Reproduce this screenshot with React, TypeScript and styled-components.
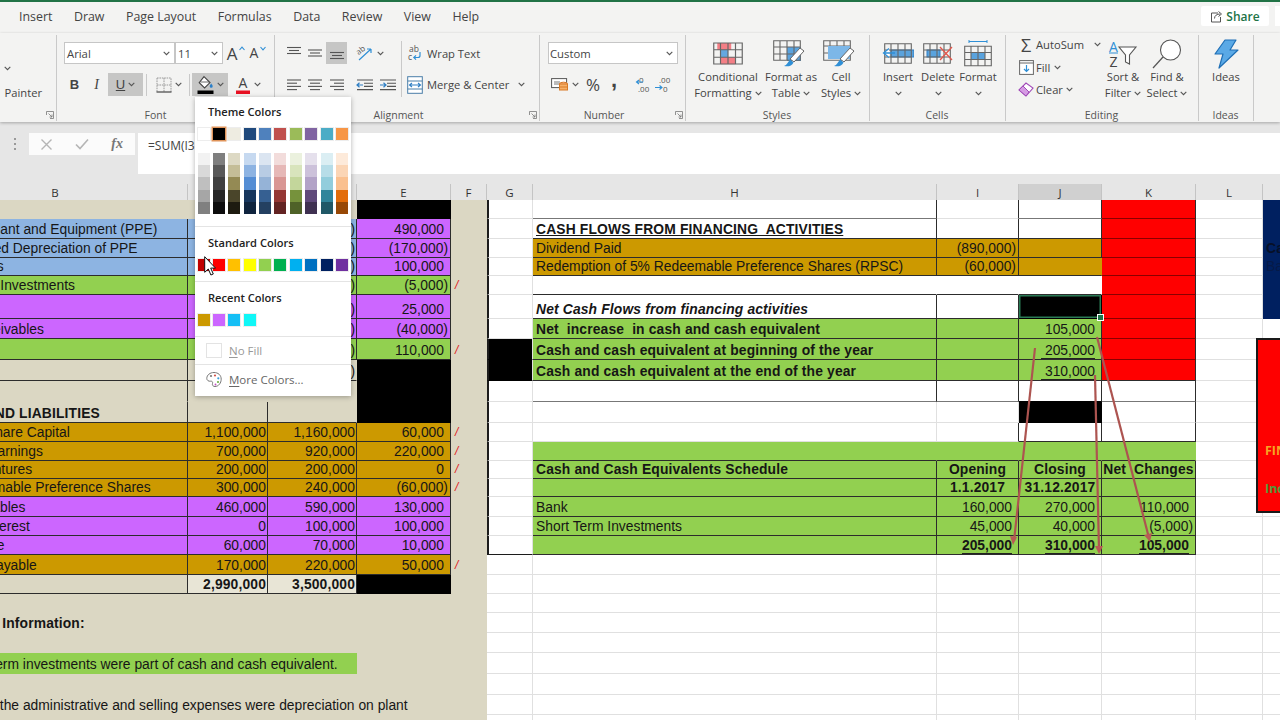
import React from 'react';
import styled, { createGlobalStyle } from 'styled-components';

const TAN = '#dbd7c3', GREEN = '#92d050', GOLD = '#cc9900', PURPLE = '#cc66ff', BLUE = '#8db4e2';
const RED = '#ff0000', BLACK = '#000000', WHITE = '#ffffff', NAVY = '#002060';
const DARK = '#2c2c2c', LIGHT = '#e0e0e0', UI = '"Open Sans", "Noto Sans", sans-serif', CELL = '"Liberation Sans", Arial, sans-serif';

const Global = createGlobalStyle`
  html, body { margin: 0; padding: 0; background: #e6e6e6; }
  * { box-sizing: border-box; }
`;

const Page = styled.div`
  position: relative; width: 1280px; height: 720px; overflow: hidden; background: #e6e6e6;
  font-family: ${UI}; color: #333;
`;
const TabBar = styled.header`
  height: 33px; border-top: 2px solid #217346; background: #f3f3f2;
  display: flex; align-items: center; justify-content: space-between; padding-left: 19px;
`;
const Tabs = styled.nav`display: flex; gap: 21.5px; font-size: 12.4px; color: #444; margin-top: -3px;`;
const TabRight = styled.div`display: flex; gap: 6px; align-items: center; margin-top: -3px;`;
const ShareBtn = styled.div`
  width: 68px; height: 20px; background: #fff; border-radius: 2px; display: flex; align-items: center; justify-content: center; gap: 3px;
  color: #217346; font-weight: 600; font-size: 12px;
`;
const Stub = styled.div`width: 5px; height: 20px; background: #fff;`;

const Ribbon = styled.div`
  height: 89px; display: flex; background: #f3f3f2; box-shadow: 0 1px 3px rgba(0,0,0,.28); position: relative; z-index: 1;
`;
const Group = styled.section<{ $w: number }>`
  position: relative; width: ${p => p.$w}px; flex: none; display: flex; flex-direction: column;
  &::after { content: ''; position: absolute; right: 0; top: 2px; bottom: 1px; width: 1px; background: #c9c9c9; }
`;
const Body = styled.div<{ $pl?: number; $pt?: number; $row?: boolean }>`
  flex: 1; min-height: 0; padding: ${p => p.$pt ?? 9}px 0 0 ${p => p.$pl ?? 0}px;
  display: flex; flex-direction: ${p => (p.$row ? 'row' : 'column')};
`;
const GroupLabel = styled.div<{ $pr?: number }>`
  height: 12px; margin-bottom: 1px; line-height: 12px; text-align: center; font-size: 10.5px; color: #555; position: relative;
  padding-right: ${p => p.$pr ?? 2}px;
`;
const Launcher = styled.svg`position: absolute; right: 3px; top: 2px; width: 8px; height: 8px;`;
const Row = styled.div<{ $h?: number; $mt?: number; $pr?: number }>`
  display: flex; align-items: center; height: ${p => p.$h ?? 22}px; margin-top: ${p => p.$mt ?? 0}px; flex: none;
  ${p => (p.$pr !== undefined ? `justify-content: flex-end; padding-right: ${p.$pr}px;` : '')}
`;
const Select = styled.div<{ $w: number; $pl?: number }>`
  width: ${p => p.$w}px; height: 22px; background: #fff; border: 1px solid #c6c6c6; display: flex; align-items: center; justify-content: space-between;
  padding: 0 4px 0 ${p => p.$pl ?? 2}px; font-size: 11.3px; color: #444; flex: none;
`;
const IconBtn = styled.div<{ $w?: number; $on?: boolean; $h?: number; $ml?: number }>`
  width: ${p => p.$w ?? 21}px; height: ${p => p.$h ?? 22}px; margin-left: ${p => p.$ml ?? 0}px; flex: none;
  display: flex; align-items: center; justify-content: center; gap: 3px; background: ${p => (p.$on ? '#c6c6c5' : 'transparent')}; color: #444;
`;
const Glyph = styled.span<{ $size?: number; $bold?: boolean; $italic?: boolean; $ul?: boolean; $font?: string; $up?: number }>`
  font-family: ${p => p.$font ?? UI}; font-size: ${p => p.$size ?? 13}px; font-weight: ${p => (p.$bold ? 700 : 400)};
  font-style: ${p => (p.$italic ? 'italic' : 'normal')}; text-decoration: ${p => (p.$ul ? 'underline' : 'none')}; line-height: 1; color: #444;
  margin-top: ${p => (p.$up ? -p.$up : 0)}px;
`;
const VSep = styled.div<{ $mx?: number }>`width: 1px; height: 22px; background: #c9c9c9; margin: 0 ${p => p.$mx ?? 3}px; flex: none;`;
const BlockSep = styled.div`width: 1px; height: 56px; margin-top: -1px; background: #c9c9c9; flex: none;`;
const RowText = styled.span`font-size: 11.2px; color: #444; white-space: nowrap;`;
const Large = styled.div<{ $w: number; $pt?: number }>`
  width: ${p => p.$w}px; flex: none; display: flex; flex-direction: column; align-items: center; font-size: 11.2px; line-height: 16px; color: #444; text-align: center; white-space: nowrap;
  padding-top: ${p => p.$pt ?? 0}px;
`;
const LargeIcon = styled.div`height: 31px; display: flex; align-items: center; justify-content: center;`;
const LargeLine = styled.div`height: 16px; display: flex; align-items: center; justify-content: center; gap: 3px;`;
const ColBlock = styled.div<{ $w?: number; $pl?: number }>`width: ${p => (p.$w ? `${p.$w}px` : 'auto')}; padding-left: ${p => p.$pl ?? 0}px; flex: none; display: flex; flex-direction: column;`;

const FormulaBar = styled.div`height: 62px; padding: 11px 0 0 0; display: flex; align-items: flex-start; background: #e6e6e6;`;
const Dots = styled.div`width: 29px; height: 22px; display: flex; align-items: center; justify-content: center;`;
const FxBox = styled.div`
  width: 106px; height: 22px; background: #fbfbfb; display: flex; align-items: center; justify-content: space-between; padding: 0 12px 0 11px; margin-right: 3px;
`;
const FxText = styled.span`font-family: "Liberation Serif", serif; font-style: italic; font-weight: 700; font-size: 14px; color: #777;`;
const FormulaInput = styled.div`flex: 1; height: 41px; background: #fff; padding: 4px 0 0 10px; font-size: 12px; color: #444;`;

const COLS = '265px 80px 89px 94px 36px 46px 404px 82px 83px 94px 67px 60px';
const HEIGHTS = [19, 20, 19, 18, 19, 24, 20, 21, 21, 21, 21, 19, 19, 18, 18, 20, 19, 19, 20, 19, 19, 20, 20, 21, 21, 20, 20];

const HeaderRow = styled.div`
  margin-left: -77px; height: 16px; display: grid; grid-template-columns: ${COLS}; background: #e6e6e6;
`;
const HeaderCell = styled.div<{ $on?: boolean }>`
  display: flex; align-items: center; justify-content: center; font-size: 11.5px; color: #333; font-family: ${UI}; padding-top: 1px;
  background: ${p => (p.$on ? '#d0d0d0' : '#e6e6e6')}; border-right: 1px solid #c4c4c4;
  border-bottom: 1px solid ${p => (p.$on ? '#217346' : '#9c9c9c')};
`;
const Sheet = styled.div`
  margin-left: -77px; display: grid; grid-template-columns: ${COLS}; grid-template-rows: ${HEIGHTS.map(h => `${h}px`).join(' ')};
  font-family: ${CELL}; font-size: 13.85px; line-height: 17px; color: #161616;
`;

type Spec = {
  t?: React.ReactNode; bg?: string; al?: 'l' | 'r' | 'c'; bold?: boolean; it?: boolean; ul?: boolean; pad?: number; color?: string; span?: number;
  b?: string; r?: string; sel?: boolean; lb?: boolean;
};
const Cell = styled.div<{ $s: Spec }>`
  min-width: 0; white-space: pre; display: flex; align-items: flex-end; position: relative;
  grid-column: span ${p => p.$s.span ?? 1};
  background: ${p => p.$s.bg ?? WHITE}; color: ${p => p.$s.color ?? 'inherit'};
  justify-content: ${p => (p.$s.al === 'r' ? 'flex-end' : p.$s.al === 'c' ? 'center' : 'flex-start')};
  padding: 0 ${p => (p.$s.al === 'r' ? p.$s.pad ?? 1 : 0)}px 0 ${p => (p.$s.al === 'r' || p.$s.al === 'c' ? 0 : p.$s.pad ?? 3)}px;
  font-weight: ${p => (p.$s.bold ? 700 : 400)}; font-style: ${p => (p.$s.it ? 'italic' : 'normal')};
  letter-spacing: ${p => (p.$s.bold ? '.15px' : '0')};
  text-decoration: ${p => (p.$s.ul ? 'underline' : 'none')};
  border-bottom: 1px solid ${p => p.$s.b ?? 'transparent'}; border-right: 1px solid ${p => p.$s.r ?? 'transparent'};
  ${p => (p.$s.lb ? 'border-left: 2px solid #1c1c1c;' : '')}
  ${p => (p.$s.sel ? `
    box-shadow: inset 0 0 0 1.5px #2a7a55;
    &::after { content: ''; position: absolute; right: -3px; bottom: -3px; width: 5px; height: 5px; background: #217346; border: 1px solid #fff; z-index: 1; }
  ` : '')}
`;
const Under = styled.span`display: inline-block; border-bottom: 1px solid #222; line-height: 15px; padding-left: 4px;`;
const Slash = styled.span`color: #e02020; font-style: italic; font-size: 12px; padding-left: 1px;`;
const BigUnder = styled.span`display: inline-block; border-bottom: 1px solid #222; line-height: 15px; font-weight: 700;`;

const Shape = styled.div`
  position: absolute; left: 1256px; top: 338px; width: 40px; height: 175px; background: #fe0000; border: 2px solid #1a1a1a;
  font-family: ${UI}; font-weight: 700; font-size: 12.5px; padding: 102px 0 0 7px; white-space: nowrap;
`;
const ShapeLine = styled.div<{ $c: string }>`color: ${p => p.$c}; height: 38px; line-height: 18px;`;
const Arrows = styled.svg`position: absolute; left: 0; top: 0; width: 1280px; height: 720px; pointer-events: none;`;

const Popup = styled.div`
  position: absolute; left: 195px; top: 97px; width: 156px; height: 299px; background: #fff; box-shadow: 0 1px 5px rgba(0,0,0,.3);
  display: flex; flex-direction: column; z-index: 3; font-size: 11.5px; color: #222;
`;
const PopTitle = styled.div<{ $mt?: number }>`font-weight: 600; font-size: 11.1px; line-height: 16px; padding-left: 13px; margin-top: ${p => p.$mt ?? 0}px; color: #222;`;
const SwatchRow = styled.div<{ $mt?: number }>`
  display: flex; gap: 3.4px; padding-left: 2.5px; margin-top: ${p => p.$mt ?? 0}px;
`;
const Swatch = styled.div<{ $c: string; $sel?: boolean }>`
  width: 12px; height: 12px; background: ${p => p.$c}; flex: none; box-shadow: ${p => (p.$sel ? '0 0 0 1.5px #e0945a' : '0 0 0 1px rgba(0,0,0,.07)')};
`;
const ShadeCol = styled.div`display: flex; flex-direction: column; width: 12px;`;
const Shade = styled.div<{ $c: string }>`height: 12.2px; background: ${p => p.$c};`;
const Divider = styled.div<{ $mt: number }>`height: 1px; background: #e4e4e4; margin-top: ${p => p.$mt}px; flex: none;`;
const PopItem = styled.div<{ $h: number; $muted?: boolean }>`
  height: ${p => p.$h}px; display: flex; align-items: center; gap: 7px; padding-left: 11px; flex: none; color: ${p => (p.$muted ? '#999' : '#666')};
  & u { text-underline-offset: 2px; }
`;
const NoFillBox = styled.div`width: 16px; height: 15px; border: 1px solid #e3e3e3; background: #fff;`;
const Cursor = styled.svg`position: absolute; left: 204px; top: 256px; width: 12px; height: 20px; z-index: 4;`;

const Chevron = ({ c = '#555' }: { c?: string }) => (
  <svg width="7" height="5" viewBox="0 0 7 5"><path d="M.7.9 3.5 3.7 6.3.9" fill="none" stroke={c} strokeWidth="1.1" /></svg>
);
const LauncherIcon = () => (
  <Launcher viewBox="0 0 8 8"><path d="M.5 4V.5H7.5V7.5H4M2.5 2.5 6 6M6 3.5V6H3.5" fill="none" stroke="#777" strokeWidth=".8" /></Launcher>
);
const Lines = ({ y, al }: { y: number[]; al: ('l' | 'c' | 'r' | 'f')[] }) => (
  <svg width="16" height="14" viewBox="0 0 16 14">
    {y.map((v, i) => {
      const k = al[i];
      const [a, b] = k === 'f' ? [1, 15] : k === 'l' ? [1, 11] : k === 'r' ? [5, 15] : [3, 13];
      return <path key={i} d={`M${a} ${v}H${b}`} stroke="#555" strokeWidth="1.1" />;
    })}
  </svg>
);
const AlignH = ({ k }: { k: 'l' | 'c' | 'r' }) => <Lines y={[2, 5.2, 8.4, 11.6]} al={k === 'l' ? ['f', 'l', 'f', 'l'] : k === 'c' ? ['f', 'c', 'f', 'c'] : ['f', 'r', 'f', 'r']} />;
const Indent = ({ rev }: { rev?: boolean }) => (
  <svg width="18" height="14" viewBox="0 0 18 14">
    <path d="M1 2H17M8 5.2H17M8 8.4H17M1 11.6H17" stroke="#555" strokeWidth="1.1" />
    <path d={rev ? 'M7 7H1M3.5 4.8 1 7l2.5 2.2' : 'M1 7H7M4.5 4.8 7 7 4.5 9.2'} fill="none" stroke="#2f7fc4" strokeWidth="1.2" />
  </svg>
);
const Borders = () => (
  <svg width="16" height="16" viewBox="0 0 16 16">
    <path d="M1 1H15V15M1 1V15M8 1V15M1 8H15" fill="none" stroke="#999" strokeWidth="1" strokeDasharray="1.6 .8" />
    <path d="M.5 15H15.5" stroke="#444" strokeWidth="1.2" />
  </svg>
);
const FillBucket = () => (
  <svg width="17" height="20" viewBox="0 0 17 20">
    <path d="M7 1.6 13 7.6 7.6 13 2.2 7.6Z" fill="#fff" stroke="#444" strokeWidth="1.1" />
    <path d="M3.5 7 12 7" stroke="#444" strokeWidth=".8" />
    <path d="M14.2 8.5c1 1.4 1.5 2 1.5 2.8a1.5 1.5 0 0 1-3 0c0-.8.5-1.4 1.5-2.8Z" fill="#2a7fc9" />
    <rect x="0.5" y="15.5" width="16" height="3.5" fill="#000" />
  </svg>
);
const FontColor = () => (
  <svg width="16" height="20" viewBox="0 0 16 20">
    <text x="8" y="13" textAnchor="middle" fontFamily={UI} fontSize="14" fill="#444">A</text>
    <rect x="1" y="15.5" width="14" height="3.5" fill="#e81123" />
  </svg>
);
const Caret = ({ up }: { up?: boolean }) => (
  <svg width="6" height="5" viewBox="0 0 6 5"><path d={up ? 'M.5 4 3 1.2 5.5 4' : 'M.5 1 3 3.8 5.5 1'} fill="none" stroke="#2f8fd6" strokeWidth="1.1" /></svg>
);
const CaretWrap = styled.span`display: flex; align-items: flex-start; height: 14px; margin-left: -1px;`;
const Orient = () => (
  <svg width="18" height="18" viewBox="0 0 18 18">
    <text x="1" y="9" transform="rotate(-38 5 8)" fontFamily={UI} fontSize="8" fill="#555">ab</text>
    <path d="M3 16 15 5M15 5h-4M15 5v4" fill="none" stroke="#2f8fd6" strokeWidth="1.2" />
  </svg>
);
const WrapIcon = () => (
  <svg width="16" height="18" viewBox="0 0 16 18">
    <text x="2" y="7.5" fontFamily={UI} fontSize="8.5" fill="#555">ab</text>
    <text x="1" y="16" fontFamily={UI} fontSize="8.5" fill="#555">c</text>
    <path d="M13 8v3.5a2 2 0 0 1-2 2H7M9 11.3 6.8 13.5 9 15.7" fill="none" stroke="#2f8fd6" strokeWidth="1.2" />
  </svg>
);
const MergeIcon = () => (
  <svg width="16" height="18" viewBox="0 0 16 18">
    <rect x=".7" y=".7" width="14.6" height="16.6" fill="#fff" stroke="#4a7ea8" strokeWidth="1" />
    <path d="M.7 5H15.3M.7 13H15.3" stroke="#4a7ea8" strokeWidth="1" />
    <path d="M2.5 9H13.5M5 7 2.5 9 5 11M11 7l2.5 2L11 11" fill="none" stroke="#2f7fc4" strokeWidth="1.1" />
  </svg>
);
const Accounting = () => (
  <svg width="18" height="17" viewBox="0 0 18 17">
    <rect x=".6" y="2.6" width="15" height="9" fill="#fff" stroke="#555" />
    <rect x="3" y="5" width="6" height="4" fill="#bbb" />
    <ellipse cx="12.5" cy="8" rx="4" ry="1.8" fill="#f4b183" stroke="#d97b27" />
    <rect x="8.5" y="8" width="8" height="6" fill="#f7b26b" stroke="#d97b27" />
    <path d="M8.5 11H16.5" stroke="#d97b27" />
  </svg>
);
const Decimal = ({ inc }: { inc?: boolean }) => (
  <svg width="20" height="20" viewBox="0 0 20 20">
    <text x="5" y="8" fontFamily={UI} fontSize="8" fill="#555">{inc ? '.00' : '0'}</text>
    <text x={inc ? 9 : 4} y="17" fontFamily={UI} fontSize="8" fill="#555">{inc ? '0' : '.00'}</text>
    <path d={inc ? 'M1 12.5H8M5.5 10.5 8 12.5 5.5 14.5' : 'M9 7H2.5M5 5 2.5 7 5 9'} fill="none" stroke="#2f8fd6" strokeWidth="1.1" />
  </svg>
);
const TableGrid = ({ children, w = 28, h = 21 }: { children?: React.ReactNode; w?: number; h?: number }) => (
  <>
    {children}
    <path d={`M.7.7H${w - .7}V${h - .7}H.7ZM${w * .25} .7V${h - .7}M${w * .5} .7V${h - .7}M${w * .75} .7V${h - .7}M.7 ${h / 3}H${w - .7}M.7 ${(2 * h) / 3}H${w - .7}`} fill="none" stroke="#666" strokeWidth="1.1" />
  </>
);
const Brush = () => (
  <>
    <path d="M27 9 31 12 21 23 17 20Z" fill="#fff" stroke="#666" strokeWidth="1" />
    <path d="M17 20.5 20.5 23.5C19 27 15 28 11 27 14 26 15 23 17 20.5Z" fill="#2f8fd6" />
  </>
);
const CondIcon = () => (
  <svg width="30" height="23" viewBox="0 0 28 21">
    <TableGrid>
      <rect x="4" y=".7" width="13" height="6.5" fill="#f47f86" />
      <rect x="7" y="7" width="7" height="7" fill="#65a8e0" />
      <rect x="7" y="14" width="14" height="6.5" fill="#f47f86" />
    </TableGrid>
  </svg>
);
const FmtTableIcon = () => (
  <svg width="36" height="29" viewBox="0 0 36 29">
    <g transform="translate(0 1)"><TableGrid><rect x="14" y="7" width="14" height="14" fill="#5aa3de" /></TableGrid></g>
    <Brush />
  </svg>
);
const CellStyleIcon = () => (
  <svg width="36" height="29" viewBox="0 0 36 29">
    <g transform="translate(0 1)">
      <path d="M.7.7H27.3V20.3H.7ZM.7 6H27.3M7 .7V6M14 .7V6M21 .7V6M.7 13H6M.7 6V20" fill="none" stroke="#666" strokeWidth="1.1" />
      <rect x="5" y="6" width="22" height="13" fill="#7cb7e8" />
    </g>
    <Brush />
  </svg>
);
const InsertIcon = () => (
  <svg width="32" height="23" viewBox="0 0 32 23">
    <g transform="translate(2 1)"><TableGrid><rect x="7" y="7" width="23" height="7" fill="#5aa3de" stroke="#2f7fc4" /></TableGrid></g>
    <path d="M13 11H1.5M7 6.5 1.5 11 7 15.5" fill="#fff" stroke="#2f8fd6" strokeWidth="1.3" />
  </svg>
);
const DeleteIcon = () => (
  <svg width="30" height="23" viewBox="0 0 30 23">
    <g transform="translate(0 1)"><TableGrid><rect x="4" y="7" width="13" height="7" fill="#5aa3de" stroke="#2f7fc4" /></TableGrid></g>
    <path d="M17 5 29 18M29 5 17 18" stroke="#e2574c" strokeWidth="1.3" />
  </svg>
);
const FormatIcon = () => (
  <svg width="28" height="27" viewBox="0 0 28 27">
    <path d="M5 1.5H23M5 0V3M23 0V3" stroke="#2f8fd6" strokeWidth="1" />
    <g transform="translate(0 5.5)"><TableGrid><rect x="7" y="7" width="14" height="7" fill="#5aa3de" /></TableGrid></g>
  </svg>
);
const FillDown = () => (
  <svg width="15" height="15" viewBox="0 0 15 15">
    <rect x=".6" y=".6" width="13.8" height="13.8" fill="#fff" stroke="#666" />
    <path d="M.6 3H14.4" stroke="#666" />
    <path d="M7.5 5V11.5M5 9l2.5 2.5L10 9" fill="none" stroke="#2f8fd6" strokeWidth="1.2" />
  </svg>
);
const Eraser = () => (
  <svg width="16" height="15" viewBox="0 0 16 15">
    <path d="M1 8 8 1 15 6 8 14Z" fill="#fff" stroke="#a14bb8" strokeWidth="1.1" />
    <path d="M1 8 5 4 11 10 8 14Z" fill="#d59be3" stroke="#a14bb8" strokeWidth="1" />
  </svg>
);
const SortIcon = () => (
  <svg width="30" height="29" viewBox="0 0 30 29">
    <text x="1" y="13" fontFamily={UI} fontSize="14" fill="#2f8fd6">A</text>
    <path d="M1 14H10" stroke="#2f8fd6" />
    <text x="1.5" y="28" fontFamily={UI} fontSize="14" fill="#444">Z</text>
    <path d="M11 8H28L21.5 16V25L17.5 23V16Z" fill="#fff" stroke="#555" strokeWidth="1.1" />
  </svg>
);
const FindIcon = () => (
  <svg width="30" height="30" viewBox="0 0 30 30">
    <circle cx="18.5" cy="11" r="10" fill="#fff" stroke="#555" strokeWidth="1.1" />
    <path d="M11 18 1 29" stroke="#555" strokeWidth="1.2" />
  </svg>
);
const Bolt = () => (
  <svg width="26" height="30" viewBox="0 0 26 30">
    <path d="M12 1H23L17 11H25L6 29 10 15H2Z" fill="#5aa9e6" stroke="#1f6fb5" strokeWidth="1.2" strokeLinejoin="round" />
  </svg>
);
const ShareIcon = () => (
  <svg width="13" height="13" viewBox="0 0 13 13">
    <path d="M8 3H1.5V12H10.5V7M4.5 8.5C4.5 5.5 7 4 10 4M8.5 1.5 11.5 4 8.5 6.5" fill="none" stroke="#555" strokeWidth="1" />
  </svg>
);
const Palette = () => (
  <svg width="16" height="17" viewBox="0 0 16 17">
    <path d="M8 1.5C4 1.5.8 4 .8 7.5c0 2 2 3 3.7 2.7 1.5-.3 2.5.8 2 2.3-.5 1.7.5 3 2.5 3 3.5 0 6.2-3.5 6.2-7.3C15.2 4 12 1.5 8 1.5Z" fill="#fff" stroke="#777" />
    <circle cx="5" cy="5" r="1.1" fill="#777" /><circle cx="9" cy="4.5" r="1.1" fill="#d4534a" /><circle cx="12.3" cy="7.3" r="1.1" fill="#3aa0dc" /><circle cx="12" cy="11" r="1.1" fill="#6cb33f" /><circle cx="9.5" cy="13.5" r=".9" fill="#c050c0" />
  </svg>
);

const THEME = ['#ffffff', '#000000', '#eeece1', '#1f497d', '#4f81bd', '#c0504d', '#9bbb59', '#8064a2', '#4bacc6', '#f79646'];
const SHADES = [
  ['#f2f2f2', '#d9d9d9', '#bfbfbf', '#a6a6a6', '#808080'],
  ['#7f7f7f', '#595959', '#404040', '#262626', '#0d0d0d'],
  ['#ddd9c4', '#c4bd97', '#948a54', '#4a452a', '#1d1b10'],
  ['#c6d9f0', '#8db3e2', '#548dd4', '#17365d', '#0f243e'],
  ['#dbe5f1', '#b8cce4', '#95b3d7', '#366092', '#244061'],
  ['#f2dcdb', '#e6b8b7', '#d99694', '#953734', '#632423'],
  ['#ebf1de', '#d8e4bc', '#c3d69b', '#76923c', '#4f6228'],
  ['#e5e0ec', '#ccc1da', '#b2a2c7', '#5f497a', '#3f3151'],
  ['#dbeef3', '#b7dde8', '#92cddc', '#31859b', '#205867'],
  ['#fdeada', '#fbd5b5', '#fac08f', '#e36c09', '#974806'],
];
const STANDARD = ['#c00000', '#ff0000', '#ffc000', '#ffff00', '#92d050', '#00b050', '#00b0f0', '#0070c0', '#002060', '#7030a0'];
const RECENT = ['#cc9900', '#cc66ff', '#16bff5', '#11f7f7'];

const HEADERS = ['B', 'C', 'D', 'E', 'F', 'G', 'H', 'I', 'J', 'K', 'L', 'M'];
const TABS = ['Insert', 'Draw', 'Page Layout', 'Formulas', 'Data', 'Review', 'View', 'Help'];

type L = [string, string, string, string, string, string?, boolean?];
// label, colour, C, D, E, E colour, slash. C and D lie under the colour menu on the first rows; only the closing bracket of D shows.
const LEFT: L[] = [
  ['', TAN, '', '', '', BLACK],
  ['Property, Plant and Equipment (PPE)', BLUE, '', ')', '490,000', PURPLE],
  ['Accumulated Depreciation of PPE', BLUE, '', ')', '(170,000)', PURPLE],
  ['Investments', BLUE, '', ')', '100,000', PURPLE],
  ['Short Term Investments', GREEN, '', ')', '(5,000)', GREEN, true],
  ['Inventories', PURPLE, '', ')', '25,000', PURPLE],
  ['Trade Receivables', PURPLE, '', ')', '(40,000)', PURPLE],
  ['Bank', GREEN, '', ')', '110,000', GREEN, true],
  ['', TAN, '', ')', '', BLACK],
  ['', TAN, '', '', '', BLACK],
  ['EQUITY AND LIABILITIES', TAN, '', '', '', BLACK],
  ['Ordinary Share Capital', GOLD, '1,100,000', '1,160,000', '60,000', GOLD, true],
  ['Retained Earnings', GOLD, '700,000', '920,000', '220,000', GOLD, true],
  ['10% Debentures', GOLD, '200,000', '200,000', '0', GOLD, true],
  ['5% Redeemable Preference Shares', GOLD, '300,000', '240,000', '(60,000)', GOLD, true],
  ['Trade Payables', PURPLE, '460,000', '590,000', '130,000', PURPLE],
  ['Accrued Interest', PURPLE, '0', '100,000', '100,000', PURPLE],
  ['Tax Payable', PURPLE, '60,000', '70,000', '10,000', PURPLE],
  ['Dividend Payable', GOLD, '170,000', '220,000', '50,000', GOLD, true],
];
const pad = (t: string) => (t.endsWith(')') ? 2 : 6);

const leftCells = (i: number): Spec[] => {
  if (i < LEFT.length) {
    const [label, bg, c, d, e, ebg, slash] = LEFT[i];
    const colored = bg !== TAN;
    const lined = colored || i === 8 || i === 7 || i === 10;
    const line = lined ? DARK : undefined;
    const vC = i >= 8 || colored ? DARK : undefined;
    const vD = i >= 10 || colored ? DARK : undefined;
    return [
      { t: label, bg, bold: i === 10, pad: 6, b: line, r: vC },
      { t: c, bg, al: 'r', b: line, r: vD },
      { t: d, bg, al: 'r', b: line, r: colored ? DARK : undefined },
      { t: e, bg: ebg, al: 'r', pad: pad(e), b: colored ? DARK : undefined, r: colored ? DARK : undefined },
      { t: slash ? <Slash>/</Slash> : '', bg: TAN },
    ];
  }
  const base: Spec = { bg: TAN };
  if (i === 19) return [
    { ...base, r: DARK, b: DARK },
    { t: '2,990,000', bg: '#e8e5d6', al: 'r', bold: true, b: DARK, r: DARK },
    { t: '3,500,000', bg: '#e8e5d6', al: 'r', bold: true, b: DARK, r: DARK },
    { bg: BLACK }, base,
  ];
  if (i === 21) return [{ t: 'Additional Information:', bg: TAN, bold: true, span: 3, pad: 6 }, base, base];
  if (i === 23) return [{ t: 'The short term investments were part of cash and cash equivalent.', bg: GREEN, span: 3, pad: 6 }, base, base];
  if (i === 25) return [{ t: '3. Some of the administrative and selling expenses were depreciation on plant', bg: TAN, span: 4, pad: 6 }, base];
  return [base, base, base, base, base];
};

const g = (i: number, bg?: string): Spec => ({ bg: bg ?? WHITE, lb: i <= 17, b: i === 17 ? '#1c1c1c' : bg ? bg : LIGHT, r: LIGHT });
const gridCell: Spec = { b: LIGHT, r: LIGHT };

const rightCells = (i: number): Spec[] => {
  const l = gridCell;
  const m: Spec = i <= 5 ? { bg: NAVY, b: NAVY } : { b: LIGHT };
  if (i === 2) Object.assign(m, { t: 'Ca', bold: true, color: '#061028' });
  if (i === 3) Object.assign(m, { t: 'Ba', color: '#061a48' });
  const k = (o: Spec = {}): Spec => ({ bg: RED, b: '#8a0000', r: DARK, ...o });
  const row = (h: Spec, ib: Spec, j: Spec, kk: Spec, gc?: string): Spec[] => [g(i, gc), h, ib, j, kk, l, m];
  const d = { b: DARK, r: DARK };
  const gr = { bg: GREEN, b: DARK, r: DARK };
  const rn = (t: string, o: Spec = {}): Spec => ({ ...gr, t, al: 'r', pad: pad(t), ...o });
  switch (i) {
    case 0: return row({ ...d, b: '#777' }, { ...d, b: LIGHT }, { ...d, b: '#777' }, k());
    case 1: return row({ ...d, t: 'CASH FLOWS FROM FINANCING  ACTIVITIES', bold: true, ul: true }, { ...d }, { ...d }, k());
    case 2: return row({ bg: GOLD, ...d, t: 'Dividend Paid' }, { bg: GOLD, ...d, t: '(890,000)', al: 'r', pad: 2 }, { bg: GOLD, ...d }, k());
    case 3: return row({ bg: GOLD, ...d, t: 'Redemption of 5% Redeemable Preference Shares (RPSC)' }, { bg: GOLD, ...d, t: '(60,000)', al: 'r', pad: 2 }, { bg: GOLD, b: DARK }, k());
    case 4: return row({ b: DARK }, { b: DARK }, { b: DARK }, k());
    case 5: return row({ ...d, t: 'Net Cash Flows from financing activities', bold: true, it: true }, { ...d }, { bg: BLACK, sel: true }, k());
    case 6: return row({ ...gr, t: 'Net  increase  in cash and cash equivalent', bold: true }, { ...gr }, rn('105,000'), k());
    case 7: return row({ ...gr, t: 'Cash and cash equivalent at beginning of the year', bold: true }, { ...gr }, rn('', { t: <Under>205,000</Under>, pad: 6 }), k(), BLACK);
    case 8: return row({ ...gr, t: 'Cash and cash equivalent at the end of the year', bold: true }, { ...gr }, rn('', { t: <Under>310,000</Under>, pad: 6 }), k({ b: DARK }), BLACK);
    case 9: return row({ b: '#777', r: DARK }, { b: '#777', r: DARK }, { b: BLACK, r: DARK }, { b: '#777', r: DARK });
    case 10: return row({ b: LIGHT, r: LIGHT }, { b: LIGHT, r: LIGHT }, { bg: BLACK, b: BLACK }, { b: LIGHT, r: DARK });
    case 11: return row({ b: LIGHT, r: LIGHT }, { b: LIGHT, r: DARK }, { b: DARK, r: DARK }, { b: DARK, r: DARK });
    case 12: return row({ bg: GREEN, b: DARK }, { bg: GREEN, b: DARK }, { bg: GREEN, b: DARK }, { bg: GREEN, b: DARK });
    case 13: return row({ ...gr, t: 'Cash and Cash Equivalents Schedule', bold: true }, { ...gr, t: 'Opening', bold: true, al: 'c' }, { ...gr, t: 'Closing', bold: true, al: 'c' }, { ...gr, t: 'Net  Changes', bold: true, al: 'c' });
    case 14: return row({ ...gr }, { ...gr, t: '1.1.2017', bold: true, al: 'c' }, { ...gr, t: '31.12.2017', bold: true, al: 'c' }, { ...gr });
    case 15: return row({ ...gr, t: 'Bank' }, rn('160,000'), rn('270,000'), rn('110,000'));
    case 16: return row({ ...gr, t: 'Short Term Investments' }, rn('45,000'), rn('40,000'), rn('(5,000)'));
    case 17: return row({ ...gr }, rn('', { t: <BigUnder>205,000</BigUnder>, pad: 6 }), rn('', { t: <BigUnder>310,000</BigUnder>, pad: 6 }), rn('', { t: <BigUnder>105,000</BigUnder>, pad: 6 }));
    default: return [l, l, l, l, l, l, { b: LIGHT }];
  }
};

const ROWS = HEIGHTS.map((_, i) => [...leftCells(i), ...rightCells(i)]);

const FontGroup = () => (
  <Group $w={218}>
    <Body $pl={7}>
      <Row>
        <Select $w={111}>Arial<Chevron /></Select>
        <Select $w={48}>11<Chevron /></Select>
        <IconBtn $w={24} $ml={1}><Glyph $size={17}>A</Glyph><CaretWrap><Caret up /></CaretWrap></IconBtn>
        <IconBtn $w={20}><Glyph $size={14}>A</Glyph><CaretWrap><Caret /></CaretWrap></IconBtn>
      </Row>
      <Row $mt={9} $h={23}>
        <IconBtn $h={23}><Glyph $bold $font={CELL} $size={13}>B</Glyph></IconBtn>
        <IconBtn $h={23} $ml={1}><Glyph $italic $font={'"Liberation Serif", serif'} $size={14}>I</Glyph></IconBtn>
        <IconBtn $w={35} $h={23} $ml={1} $on><Glyph $ul $font={CELL} $size={13}>U</Glyph><Chevron /></IconBtn>
        <VSep />
        <IconBtn $w={37} $h={23}><Borders /><Chevron /></IconBtn>
        <VSep $mx={2} />
        <IconBtn $w={36} $h={23} $on><FillBucket /><Chevron /></IconBtn>
        <IconBtn $w={36} $h={23} $ml={2}><FontColor /><Chevron /></IconBtn>
      </Row>
    </Body>
    <GroupLabel $pr={21}>Font<LauncherIcon /></GroupLabel>
  </Group>
);

const AlignGroup = () => (
  <Group $w={265}>
    <Body $row>
      <ColBlock $w={126} $pl={8}>
        <Row>
          <IconBtn><Lines y={[1.5, 4.5, 7.5]} al={['f', 'c', 'f']} /></IconBtn>
          <IconBtn $ml={.5}><Lines y={[4, 7, 10]} al={['f', 'c', 'f']} /></IconBtn>
          <IconBtn $ml={.5} $on><Lines y={[6.5, 9.5, 12.5]} al={['f', 'c', 'f']} /></IconBtn>
          <IconBtn $w={35} $ml={5}><Orient /><Chevron /></IconBtn>
        </Row>
        <Row $mt={9} $h={23}>
          <IconBtn $h={23}><AlignH k="l" /></IconBtn>
          <IconBtn $h={23} $ml={.5}><AlignH k="c" /></IconBtn>
          <IconBtn $h={23} $ml={.5}><AlignH k="r" /></IconBtn>
          <IconBtn $h={23} $ml={7}><Indent rev /></IconBtn>
          <IconBtn $h={23} $ml={2}><Indent /></IconBtn>
        </Row>
      </ColBlock>
      <BlockSep />
      <ColBlock>
        <Row>
          <IconBtn $w={25}><WrapIcon /></IconBtn>
          <RowText>Wrap Text</RowText>
        </Row>
        <Row $mt={9} $h={23}>
          <IconBtn $w={25}><MergeIcon /></IconBtn>
          <RowText>Merge &amp; Center</RowText>
          <IconBtn $w={24}><Chevron /></IconBtn>
        </Row>
      </ColBlock>
    </Body>
    <GroupLabel $pr={18}>Alignment<LauncherIcon /></GroupLabel>
  </Group>
);

const NumberGroup = () => (
  <Group $w={146}>
    <Body $pl={8}>
      <Row><Select $w={130} $pl={1}>Custom<Chevron /></Select></Row>
      <Row $mt={9} $h={23}>
        <IconBtn $w={34} $h={23}><Accounting /><Chevron /></IconBtn>
        <IconBtn $w={20} $h={23} $ml={1}><Glyph $size={17}>%</Glyph></IconBtn>
        <IconBtn $w={22} $h={23}><Glyph $bold $size={22} $font={CELL} $up={9}>,</Glyph></IconBtn>
        <IconBtn $w={20} $h={23} $ml={9}><Decimal /></IconBtn>
        <IconBtn $w={20} $h={23}><Decimal inc /></IconBtn>
      </Row>
    </Body>
    <GroupLabel $pr={18}>Number<LauncherIcon /></GroupLabel>
  </Group>
);

const LargeButton = ({ w, icon, lines }: { w: number; icon: React.ReactNode; lines: [string, string] }) => (
  <Large $w={w}>
    <LargeIcon>{icon}</LargeIcon>
    <LargeLine>{lines[0]}</LargeLine>
    <LargeLine>{lines[1]}<Chevron /></LargeLine>
  </Large>
);

const App = () => (
  <Page>
    <Global />
    <TabBar>
      <Tabs>{TABS.map(t => <span key={t}>{t}</span>)}</Tabs>
      <TabRight><ShareBtn><ShareIcon />Share</ShareBtn><Stub /></TabRight>
    </TabBar>
    <Ribbon>
      <Group $w={57}>
        <Body $pt={30}>
          <Row $h={10}><IconBtn $w={14} $h={10}><Chevron /></IconBtn></Row>
          <Row $h={16} $mt={11} $pr={15}><RowText>Painter</RowText></Row>
        </Body>
        <GroupLabel><LauncherIcon /></GroupLabel>
      </Group>
      <FontGroup />
      <AlignGroup />
      <NumberGroup />
      <Group $w={184}>
        <Body $row $pt={5} $pl={8}>
          <LargeButton w={68} icon={<CondIcon />} lines={['Conditional', 'Formatting']} />
          <LargeButton w={58} icon={<FmtTableIcon />} lines={['Format as', 'Table']} />
          <LargeButton w={42} icon={<CellStyleIcon />} lines={['Cell', 'Styles']} />
        </Body>
        <GroupLabel>Styles</GroupLabel>
      </Group>
      <Group $w={136}>
        <Body $row $pt={5} $pl={8}>
          <LargeButton w={40} icon={<InsertIcon />} lines={['Insert', '']} />
          <LargeButton w={40} icon={<DeleteIcon />} lines={['Delete', '']} />
          <LargeButton w={40} icon={<FormatIcon />} lines={['Format', '']} />
        </Body>
        <GroupLabel>Cells</GroupLabel>
      </Group>
      <Group $w={193}>
        <Body $row $pt={0} $pl={10}>
          <ColBlock $w={84}>
            <Row $h={23}><IconBtn $w={20}><Glyph $size={18}>Σ</Glyph></IconBtn><RowText>AutoSum</RowText><IconBtn $w={26}><Chevron /></IconBtn></Row>
            <Row $h={22}><IconBtn $w={20}><FillDown /></IconBtn><RowText>Fill</RowText><IconBtn $w={14}><Chevron /></IconBtn></Row>
            <Row $h={22}><IconBtn $w={20}><Eraser /></IconBtn><RowText>Clear</RowText><IconBtn $w={14}><Chevron /></IconBtn></Row>
          </ColBlock>
          <Large $w={46} $pt={5}>
            <LargeIcon><SortIcon /></LargeIcon>
            <LargeLine>Sort &amp;</LargeLine>
            <LargeLine>Filter <Chevron /></LargeLine>
          </Large>
          <Large $w={42} $pt={5}>
            <LargeIcon><FindIcon /></LargeIcon>
            <LargeLine>Find &amp;</LargeLine>
            <LargeLine>Select <Chevron /></LargeLine>
          </Large>
        </Body>
        <GroupLabel>Editing</GroupLabel>
      </Group>
      <Group $w={55}>
        <Body $pt={5}>
          <Large $w={54}><LargeIcon><Bolt /></LargeIcon><LargeLine>Ideas</LargeLine></Large>
        </Body>
        <GroupLabel>Ideas</GroupLabel>
      </Group>
    </Ribbon>
    <FormulaBar>
      <Dots>
        <svg width="4" height="14" viewBox="0 0 4 14"><path d="M2 1v2M2 6v2M2 11v2" stroke="#999" strokeWidth="2" /></svg>
      </Dots>
      <FxBox>
        <svg width="13" height="13" viewBox="0 0 13 13"><path d="M1.5 1.5 11.5 11.5M11.5 1.5 1.5 11.5" stroke="#b5b5b5" strokeWidth="1.4" /></svg>
        <svg width="14" height="12" viewBox="0 0 14 12"><path d="M1 6.5 5 10.5 13 1.5" fill="none" stroke="#b5b5b5" strokeWidth="1.6" /></svg>
        <FxText>fx</FxText>
      </FxBox>
      <FormulaInput>=SUM(I3</FormulaInput>
    </FormulaBar>
    <HeaderRow>
      {HEADERS.map(h => <HeaderCell key={h} $on={h === 'J'}>{h === 'M' ? '' : h}</HeaderCell>)}
    </HeaderRow>
    <Sheet>
      {ROWS.map((cells, r) => cells.map((c, i) => <Cell key={`${r}-${i}`} $s={c}>{c.t}</Cell>))}
    </Sheet>

    <Shape>
      <ShapeLine $c="#f5a623">FINANCING</ShapeLine>
      <ShapeLine $c="#4f9a3a">Increase</ShapeLine>
    </Shape>
    <Arrows viewBox="0 0 1280 720">
      <g stroke="#ad5450" strokeWidth="2.2" fill="none">
        <path d="M1035 348 1014 541" />
        <path d="M1095 375 1099 550" />
        <path d="M1097 337 1149 538" />
      </g>
      <g fill="#b85a56">
        <path d="M1013 545 1010 536 1017 537Z" />
        <path d="M1099 554 1095 546 1103 546Z" />
        <path d="M1150 542 1144 535 1152 533Z" />
      </g>
    </Arrows>

    <Popup>
      <PopTitle $mt={7}>Theme Colors</PopTitle>
      <SwatchRow $mt={8}>{THEME.map((c, i) => <Swatch key={c} $c={c} $sel={i === 1} />)}</SwatchRow>
      <SwatchRow $mt={13}>
        {SHADES.map((col, i) => <ShadeCol key={i}>{col.map(c => <Shade key={c} $c={c} />)}</ShadeCol>)}
      </SwatchRow>
      <Divider $mt={12} />
      <PopTitle $mt={8}>Standard Colors</PopTitle>
      <SwatchRow $mt={8}>{STANDARD.map(c => <Swatch key={c} $c={c} />)}</SwatchRow>
      <Divider $mt={10} />
      <PopTitle $mt={8}>Recent Colors</PopTitle>
      <SwatchRow $mt={8}>{RECENT.map(c => <Swatch key={c} $c={c} />)}</SwatchRow>
      <Divider $mt={10} />
      <PopItem $h={27} $muted><NoFillBox /><span><u>N</u>o Fill</span></PopItem>
      <Divider $mt={0} />
      <PopItem $h={30}><Palette /><span><u>M</u>ore Colors...</span></PopItem>
    </Popup>
    <Cursor viewBox="0 0 12 20">
      <path d="M.7.7V16.3L4.3 13 6.9 19 9.3 18 6.7 12.1H11.5Z" fill="#fff" stroke="#111" strokeWidth="1" />
    </Cursor>
  </Page>
);

export default App;
